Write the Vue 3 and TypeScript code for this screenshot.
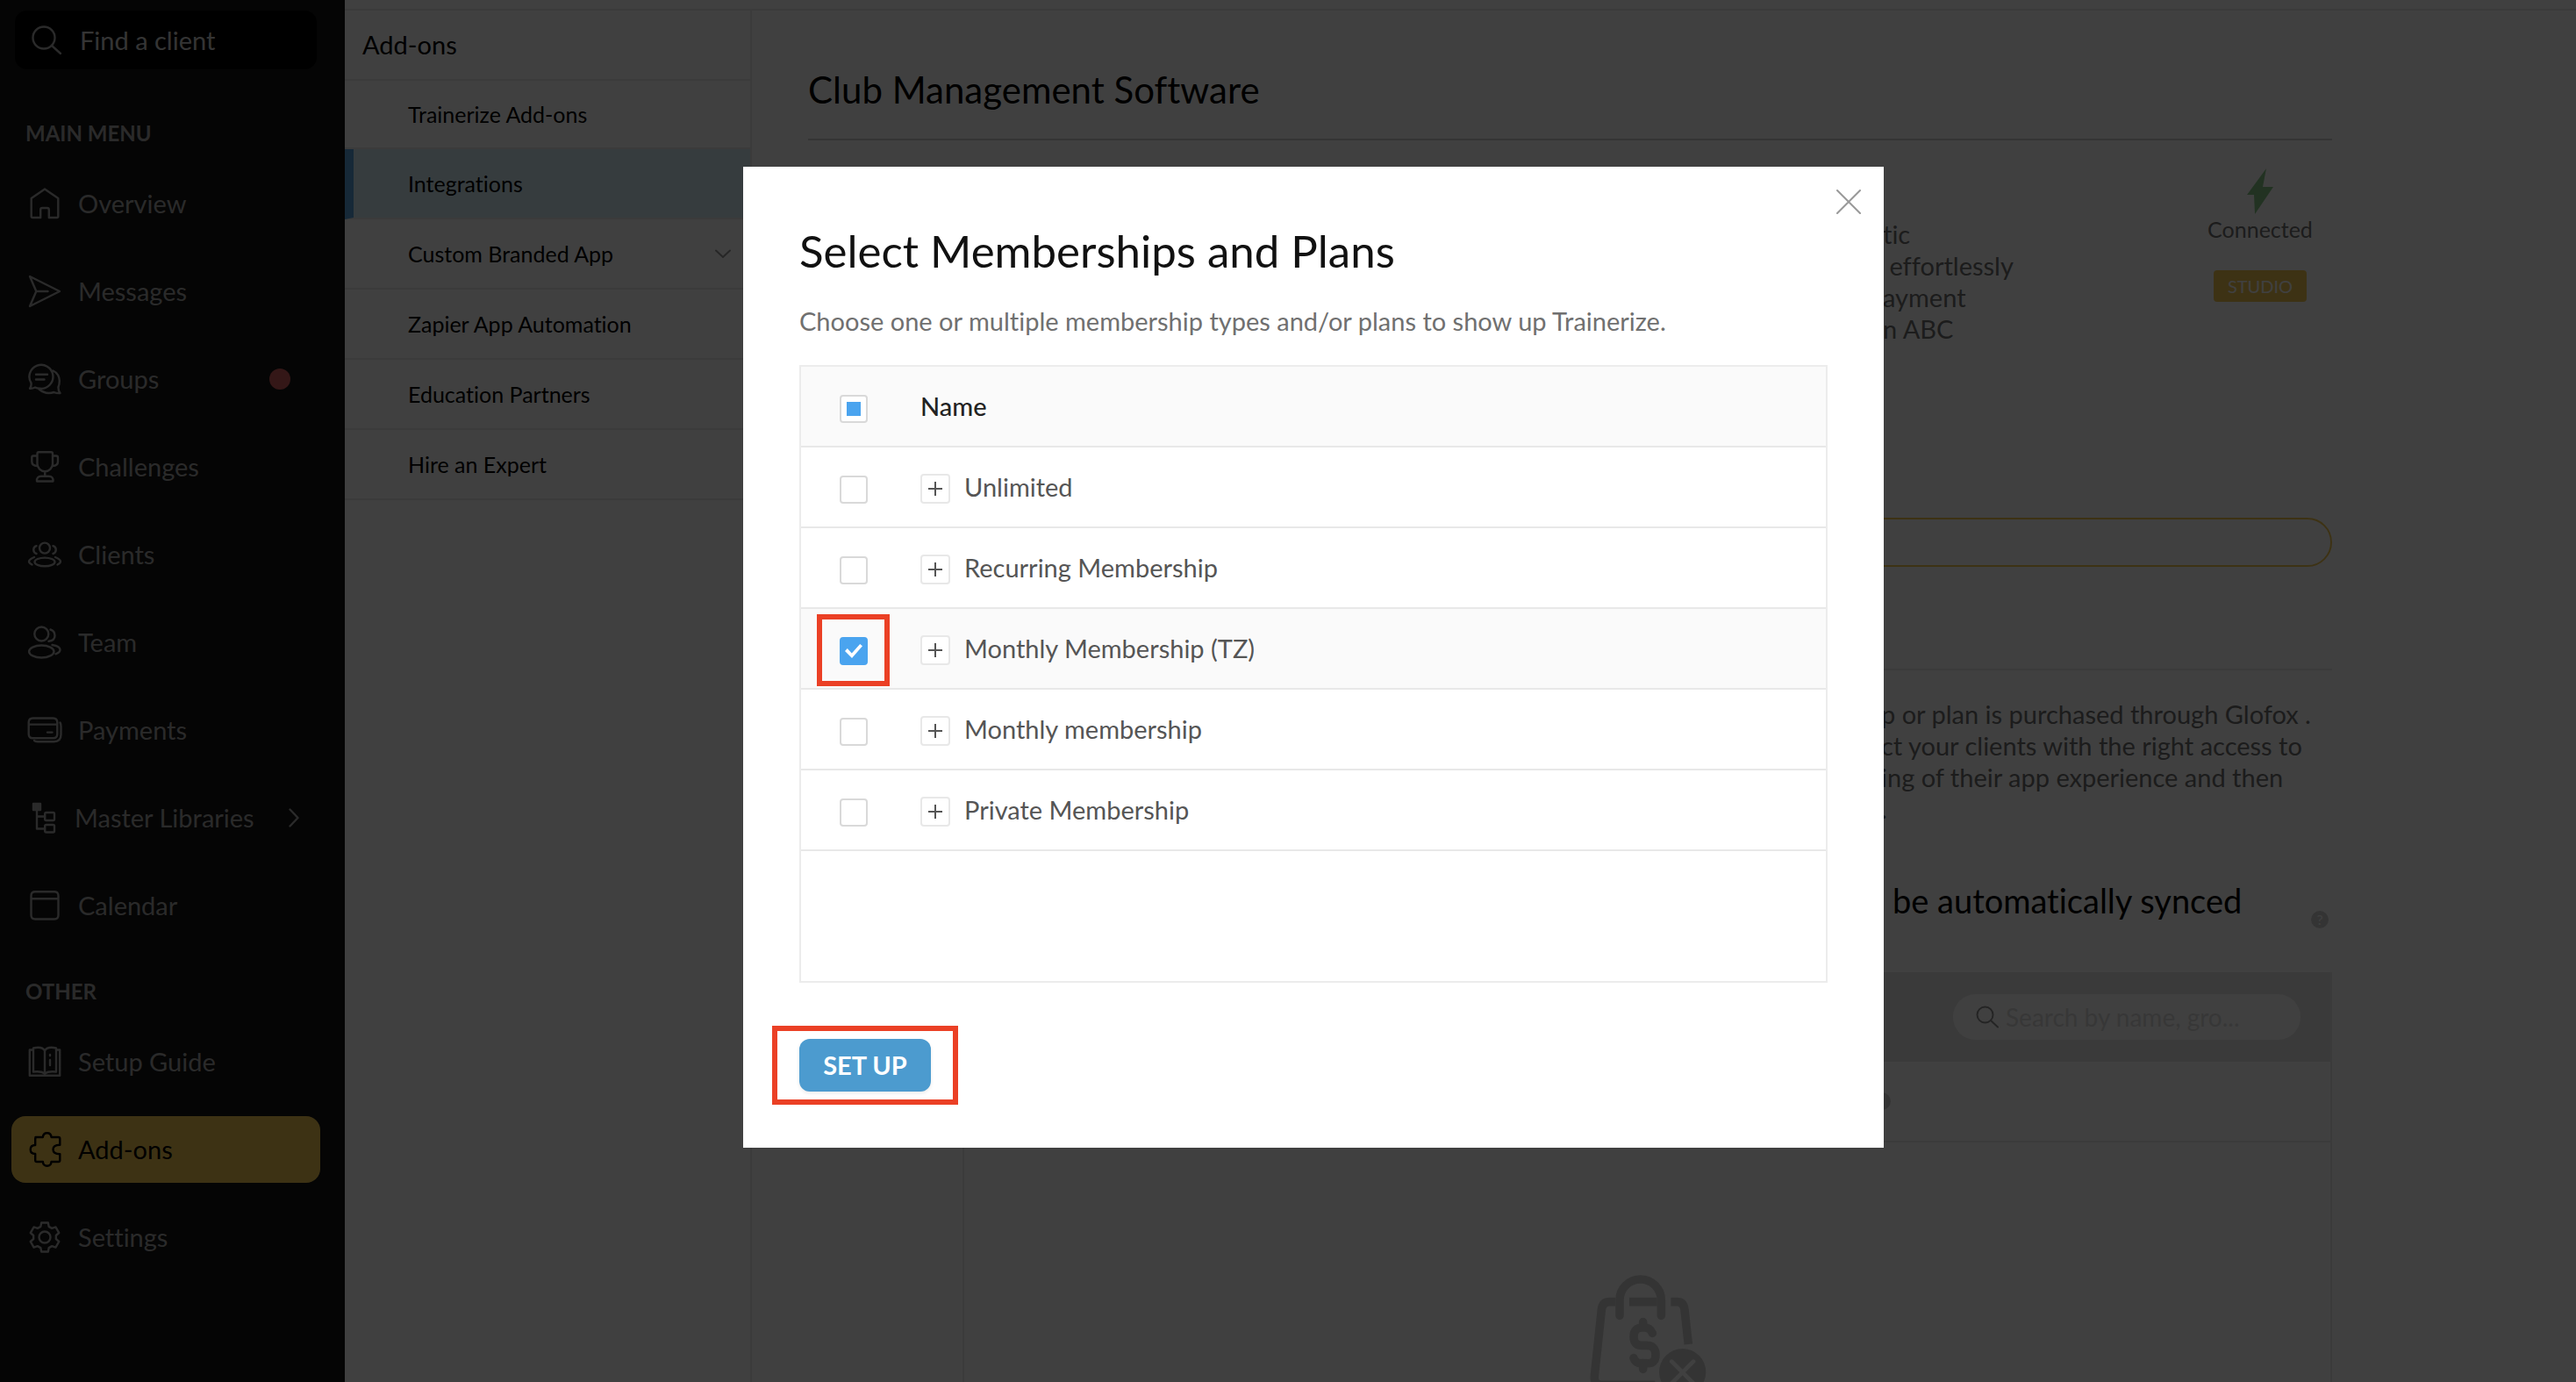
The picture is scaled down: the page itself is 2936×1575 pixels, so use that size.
<script setup lang="ts">
import { ref, computed } from 'vue'

interface NavItem {
  label: string
  icon: string
  dot?: boolean
  more?: boolean
  active?: boolean
}

// Six-toothed cog outline around (20, 20)
function cog(): string {
  const steps: [number, number][] = [[17, -13], [17, 13], [13, 21], [13, 39]]
  const points: string[] = []
  for (let tooth = 0; tooth < 6; tooth++) {
    for (const [radius, offset] of steps) {
      const angle = ((tooth * 60 + offset - 90) * Math.PI) / 180
      points.push(`${(20 + radius * Math.cos(angle)).toFixed(2)} ${(20 + radius * Math.sin(angle)).toFixed(2)}`)
    }
  }
  return `M${points.join('L')}Z M26.5 20a6.5 6.5 0 1 1-13 0a6.5 6.5 0 1 1 13 0Z`
}

const icons: Record<string, string> = {
  home: 'M20 3.5L35.3 14V34.5Q35.3 36 33.8 36H24.8V27Q24.8 25 22.8 25H17.2Q15.2 25 15.2 27V36H6.2Q4.7 36 4.7 34.5V14Z',
  send: 'M3 3L37 20L3 37L10.300 20ZM10.300 20H23.500',
  chat: 'M4.500 24.500A13.500 13.500 0 1 1 15 30.800Q11.500 31 9 29.500Q6 31 3 30.800Q5 28 4.500 24.500ZM10 14.800H23M10 20.500H19.500M29.500 10.500Q36.500 14 36.800 22Q36.800 26 35.500 29Q35.200 33 37.500 36Q34 36.500 30.500 35Q21 38 13.500 31.500',
  cup: 'M11.500 5Q11.500 3.300 13.200 3.300H27.300Q29 3.300 29 5V16.500A8.700 8.700 0 0 1 11.500 16.500ZM11.500 7.500H7Q5.300 7.500 5.300 9.500V14Q5.300 18.800 11.500 19M29 7.500H33Q35 7.500 35 9.500V14Q35 18.800 29 19M20.200 25.500V30.500M11 36.500Q10.500 30.800 16 30.800H24.500Q30 30.800 29.500 36.500Z',
  clients: 'M26 12.600a6 6 0 1 1-12 0a6 6 0 1 1 12 0ZM31.500 28.400a11.500 4.800 0 1 1-23 0a11.500 4.800 0 1 1 23 0ZM10.500 10.200A4.600 4.600 0 0 0 10.500 19M29.500 10.200A4.600 4.600 0 0 1 29.500 19M8 23Q-2.500 27.500 5.500 31.500M32 23Q42.500 27.500 34.500 31.500',
  team: 'M24.300 10.500a8 8 0 1 1-16 0a8 8 0 1 1 16 0ZM30.500 30.500a14.200 7 0 1 1-28.400 0a14.200 7 0 1 1 28.400 0ZM26.500 5.500Q31.500 7 31.500 12.500T24.500 18.800M28.500 23Q37.500 24.500 37.500 28.500Q37.500 31.500 32.500 33.300',
  card: 'M6.500 6.500H29.500Q34.300 6.500 34.300 11.300V24.500Q34.300 29.300 29.500 29.300H6.500Q1.700 29.300 1.700 24.500V11.300Q1.700 6.500 6.500 6.500ZM1.700 13.600H34.300M23 22.600H28.500M37.500 11.500Q38.500 13 38.500 16V25Q38.500 33.200 30.500 33.200H12Q9 33.200 8 32',
  tree: 'M11 12V32.500H20M11 18.500H20M21.700 14H29.500Q31 14 31 15.500V21.500Q31 23 29.500 23H21.700Q20.200 23 20.200 21.500V15.500Q20.200 14 21.700 14ZM21.700 28H29.500Q31 28 31 29.500V35Q31 36.500 29.500 36.500H21.700Q20.200 36.500 20.200 35V29.500Q20.200 28 21.700 28ZM7 4H15V11H7ZM7 6H15M7 8H15M7 10H15',
  calendar: 'M9 4.300H31Q35.500 4.300 35.500 8.800V31Q35.500 35.500 31 35.500H9Q4.500 35.500 4.500 31V8.800Q4.500 4.300 9 4.300ZM4.500 12.300H35.500',
  guide: 'M20 33.500Q16 30.500 7 31.500V4.500Q17 2 20 7.500Q23 2 33 4.500V31.500Q24 30.500 20 33.500ZM20 7.500V33.500M7 6.500H2.800V35.700H37.200V6.500H33M26 18V24M26 12V13',
  puzzle: 'M9.500 6H17.900Q18.200 1.300 22.700 1.300T27.500 6H35.500Q37.300 6 37.300 7.800V14.800Q29.500 15 29.500 20T37.300 25.200V32.200Q37.300 34 35.500 34H27.500Q27.200 38.700 22.700 38.700T17.900 34H11Q9.200 34 9.200 32.200V25Q3.700 25 3.700 20T9.200 15V7.800Q9.200 6 11 6',
  cog: cog(),
}

const mainMenu: NavItem[] = [
  { label: 'Overview', icon: 'home' },
  { label: 'Messages', icon: 'send' },
  { label: 'Groups', icon: 'chat', dot: true },
  { label: 'Challenges', icon: 'cup' },
  { label: 'Clients', icon: 'clients' },
  { label: 'Team', icon: 'team' },
  { label: 'Payments', icon: 'card' },
  { label: 'Master Libraries', icon: 'tree', more: true },
  { label: 'Calendar', icon: 'calendar' },
]
const otherMenu: NavItem[] = [
  { label: 'Setup Guide', icon: 'guide' },
  { label: 'Add-ons', icon: 'puzzle', active: true },
  { label: 'Settings', icon: 'cog' },
]
const groups = [
  { title: 'MAIN MENU', items: mainMenu },
  { title: 'OTHER', items: otherMenu },
]

const addons = [
  { label: 'Trainerize Add-ons' },
  { label: 'Integrations', active: true },
  { label: 'Custom Branded App', expandable: true },
  { label: 'Zapier App Automation' },
  { label: 'Education Partners' },
  { label: 'Hire an Expert' },
]

const memberships = ref([
  { name: 'Unlimited', checked: false },
  { name: 'Recurring Membership', checked: false },
  { name: 'Monthly Membership (TZ)', checked: true },
  { name: 'Monthly membership', checked: false },
  { name: 'Private Membership', checked: false },
])
const all = computed(() => memberships.value.every((m) => m.checked))
const some = computed(() => !all.value && memberships.value.some((m) => m.checked))
function toggleAll(event: Event) {
  const on = (event.target as HTMLInputElement).checked
  memberships.value.forEach((m) => (m.checked = on))
}
</script>

<template>
  <div class="shell">
    <aside class="sidebar">
      <label class="find">
        <svg width="36" height="36" viewBox="0 0 36 36" aria-hidden="true">
          <circle cx="15" cy="15" r="12.500" />
          <path d="M24 24L34 33" />
        </svg>
        <input type="text" placeholder="Find a client" aria-label="Find a client" />
      </label>
      <nav v-for="group in groups" :key="group.title" class="group">
        <h2>{{ group.title }}</h2>
        <a
          v-for="item in group.items"
          :key="item.label"
          href="#"
          class="nav-item"
          :class="{ active: item.active, more: item.more }"
        >
          <svg width="40" height="40" viewBox="0 0 40 40" aria-hidden="true"><path :d="icons[item.icon]" /></svg>
          <span>{{ item.label }}</span>
          <i v-if="item.dot" class="dot"></i>
          <svg v-if="item.more" class="chevron" width="12" height="22" viewBox="0 0 12 22" aria-hidden="true">
            <path d="M1.500 1.500L10.500 11L1.500 20.500" />
          </svg>
        </a>
      </nav>
    </aside>

    <div class="page">
      <section class="addons">
        <h2>Add-ons</h2>
        <a v-for="item in addons" :key="item.label" href="#" :class="{ active: item.active }">
          <span>{{ item.label }}</span>
          <svg v-if="item.expandable" width="18" height="11" viewBox="0 0 18 11" aria-hidden="true">
            <path d="M1 1.500L9 9L17 1.500" />
          </svg>
        </a>
      </section>

      <main class="content">
        <h1>Club Management Software</h1>
        <div class="intro">
          <p class="copy">tic<br />&nbsp;effortlessly<br />ayment<br />n ABC</p>
          <div class="status">
            <svg width="30" height="52" viewBox="0 0 30 52" aria-hidden="true">
              <path d="M22 0L0 30H8L9 52L30 21H18Z" />
            </svg>
            <span>Connected</span>
            <b>STUDIO</b>
          </div>
        </div>
        <div class="pill"></div>
        <div class="sync">
          <p class="copy">
            p or plan is purchased through Glofox .<br />ct your clients with the right access to<br />ing of their app
            experience and then<br />.
          </p>
          <div class="sync-title">
            <h3>be automatically synced</h3>
            <i class="help">?</i>
          </div>
        </div>
        <div class="panel">
          <div class="toolbar">
            <label class="search">
              <svg width="26" height="26" viewBox="0 0 26 26" aria-hidden="true">
                <circle cx="10.500" cy="10.500" r="9" />
                <path d="M17 17L25 24.500" />
              </svg>
              <input type="text" placeholder="Search by name, gro..." aria-label="Search by name" />
            </label>
          </div>
          <div class="columns"><i class="help"></i></div>
          <svg class="bag" width="140" height="140" viewBox="320 540 420 420" aria-hidden="true">
            <g fill="none" stroke="#d0d0d0" stroke-width="29" stroke-linecap="butt">
              <path d="M420 641H400Q375 641 372 668L348 895Q346 925 372 925H555M467 641H562M609 641H630Q653 641 656 668L669 786" />
              <path stroke-linecap="round" d="M434 688V635A71 71 0 0 1 576 635V688" />
              <path stroke-linecap="round" d="M514 710V728M514 850V871M546 748Q538 729 519 729H512Q482 729 482 760T512 790H526Q557 790 557 822T526 851H508Q488 851 482 833" />
            </g>
            <circle cx="649" cy="881" r="80" fill="#d0d0d0" stroke="none" />
            <path d="M612 845L686 919M686 845L612 919" fill="none" stroke="#fff" stroke-width="14" stroke-linecap="round" />
          </svg>
        </div>
      </main>
    </div>

    <div class="backdrop">
      <section class="modal" role="dialog" aria-labelledby="modal-title">
        <button type="button" class="close" aria-label="Close">
          <svg width="28" height="28" viewBox="0 0 28 28" aria-hidden="true"><path d="M1 1L27 27M27 1L1 27" /></svg>
        </button>
        <h2 id="modal-title">Select Memberships and Plans</h2>
        <p>Choose one or multiple membership types and/or plans to show up Trainerize.</p>
        <div class="list">
          <table>
            <thead>
              <tr>
                <th class="pick">
                  <input type="checkbox" aria-label="Select all" :checked="all" :indeterminate.prop="some" @change="toggleAll" />
                </th>
                <th>Name</th>
              </tr>
            </thead>
            <tbody>
              <tr v-for="(m, index) in memberships" :key="m.name" :class="{ checked: m.checked }">
                <td class="pick">
                  <span class="mark"><input :id="'plan-' + index" v-model="m.checked" type="checkbox" /></span>
                </td>
                <td>
                  <div class="plan">
                    <button type="button" class="expand" :aria-label="'Expand ' + m.name">
                      <svg width="16" height="16" viewBox="0 0 16 16" aria-hidden="true"><path d="M0 8H16M8 0V16" /></svg>
                    </button>
                    <label :for="'plan-' + index">{{ m.name }}</label>
                  </div>
                </td>
              </tr>
            </tbody>
          </table>
        </div>
        <button type="button" class="setup">SET UP</button>
      </section>
    </div>
  </div>
</template>

<style>
body {
  overflow: hidden;
  background: #fff;
}
</style>

<style scoped>
.shell {
  display: flex;
  height: 100vh;
  overflow: hidden;
  font-family: Lato, "Open Sans", sans-serif;
  font-size: 29px;
  font-variant-ligatures: none;
  line-height: 36px;
  color: #000;
}
.shell * {
  box-sizing: border-box;
}
h1, h2, h3, p {
  margin: 0;
  font-weight: 400;
}
a {
  color: inherit;
  text-decoration: none;
}
button, input {
  font: inherit;
}
svg {
  display: block;
  flex: none;
  fill: none;
  stroke: currentColor;
  stroke-width: 2;
  stroke-linejoin: round;
  stroke-linecap: round;
}

.sidebar {
  flex: none;
  width: 393px;
  padding-top: 12px;
  background: #141414;
  color: #a8a8a8;
}
.sidebar svg {
  stroke-width: 2.4;
}
.find {
  display: flex;
  align-items: center;
  gap: 20px;
  height: 67px;
  margin: 0 32px 13px 17px;
  padding-left: 18px;
  border-radius: 14px;
  background: #000;
}
.find input {
  width: 260px;
  padding: 0;
  border: 0;
  outline: 0;
  background: none;
  color: #d0d0d0;
}
.find input::placeholder {
  color: #d0d0d0;
  opacity: 1;
}
.group {
  display: flex;
  flex-direction: column;
  gap: 24px;
  padding: 42px 28px 0 13px;
}
.group h2 {
  padding-left: 16px;
  font-size: 24px;
  font-weight: 700;
}
.nav-item {
  display: flex;
  align-items: center;
  gap: 18px;
  height: 76px;
  padding-left: 18px;
  border-radius: 16px;
}
.nav-item.more {
  gap: 14px;
}
.nav-item.active {
  background: #f4c852;
  color: #000;
}
.dot {
  width: 24px;
  height: 24px;
  margin: 0 34px 0 auto;
  border-radius: 50%;
  background: #d05c5c;
}
.chevron {
  margin: 0 24px 0 auto;
}

.page {
  display: flex;
  flex: 1;
  min-width: 0;
  margin-top: 10px;
  border-top: 2px solid #ececec;
}
.addons {
  flex: none;
  width: 464px;
  border-right: 2px solid #ececec;
  font-size: 25px;
}
.addons h2 {
  height: 80px;
  padding-left: 20px;
  border-bottom: 2px solid #ececec;
  font-size: 29px;
  line-height: 78px;
}
.addons a {
  display: flex;
  align-items: center;
  justify-content: space-between;
  height: 80px;
  padding: 0 22px 0 72px;
  border-bottom: 2px solid #ececec;
}
.addons h2 + a {
  height: 78px;
}
.addons a.active {
  padding-left: 62px;
  border-left: 10px solid #58a4e0;
  background: #d8eef8;
}
.addons svg {
  color: #999;
}

.content {
  flex: 1;
  max-width: 1865px;
  padding: 62px 64px 0;
}
.content h1 {
  padding-bottom: 28px;
  border-bottom: 2px solid #d0d0d0;
  font-size: 42px;
  line-height: 56px;
}
.intro {
  display: flex;
  justify-content: space-between;
  padding: 32px 0 0 1225px;
  color: #707070;
}
.intro .copy {
  padding-top: 57px;
  white-space: nowrap;
}
.status {
  display: flex;
  flex-direction: column;
  align-items: center;
  width: 164px;
  font-size: 25px;
  line-height: 34px;
}
.status svg {
  fill: #88c888;
  stroke: none;
}
.status b {
  width: 106px;
  height: 36px;
  margin-top: 30px;
  border-radius: 4px;
  background: #f4c852;
  color: #fff;
  font-size: 20px;
  font-weight: 400;
  line-height: 36px;
  text-align: center;
}
.pill {
  height: 56px;
  margin-top: 197px;
  border: 2px solid #f4c852;
  border-radius: 28px;
}
.sync {
  margin-top: 116px;
  padding: 32px 0 50px 1223px;
  border-top: 2px solid #ececec;
  color: #707070;
}
.sync .copy {
  white-space: nowrap;
}
.sync-title {
  display: flex;
  align-items: flex-end;
  justify-content: space-between;
  height: 56px;
  margin-top: 62px;
  padding: 0 4px 0 13px;
  color: #000;
}
.sync h3 {
  align-self: flex-start;
  font-size: 38px;
  line-height: 48px;
}
.help {
  width: 20px;
  height: 20px;
  border-radius: 50%;
  background: #d0d0d0;
  color: #fff;
  font-size: 16px;
  font-style: normal;
  line-height: 20px;
  text-align: center;
}
.panel {
  margin-left: 176px;
  border: 2px solid #ececec;
  border-top: 0;
}
.toolbar {
  display: flex;
  align-items: center;
  justify-content: flex-end;
  height: 102px;
  padding-right: 34px;
  background: #e8e8e8;
}
.search {
  display: flex;
  align-items: center;
  gap: 8px;
  width: 396px;
  height: 52px;
  padding-left: 26px;
  border-radius: 26px;
  background: #fff;
  color: #909090;
}
.search input {
  width: 300px;
  padding: 0;
  border: 0;
  outline: 0;
  background: none;
  font-size: 28px;
}
.search input::placeholder {
  color: #dcdcdc;
  opacity: 1;
}
.columns {
  display: flex;
  align-items: center;
  height: 92px;
  padding-left: 1036px;
  border-bottom: 2px solid #ececec;
}
.bag {
  margin: 148px auto 0;
}

.backdrop {
  position: fixed;
  inset: 0;
  display: flex;
  align-items: flex-start;
  justify-content: center;
  padding: 190px 0 0 58px;
  background: rgba(0, 0, 0, 0.75);
}
.modal {
  position: relative;
  width: 1300px;
  padding: 66px 64px 64px;
  background: #fff;
}
.modal h2 {
  font-size: 51px;
  line-height: 60px;
  color: #111;
}
.modal p {
  margin: 32px 0;
  color: #707070;
}
.close {
  position: absolute;
  top: 26px;
  right: 26px;
  padding: 0;
  border: 0;
  background: none;
  color: #999;
}
.list {
  min-height: 704px;
  border: 2px solid #ececec;
}
table {
  width: 100%;
  border-spacing: 0;
}
th, td {
  height: 92px;
  padding: 0;
  border-bottom: 2px solid #e8e8e8;
  text-align: left;
  color: #555;
}
th {
  background: #fafafa;
  color: #222;
  font-weight: 500;
}
.checked td {
  background: #fafafa;
}
.pick {
  width: 136px;
  padding: 6px 0 0 44px;
}
.mark {
  position: relative;
  display: block;
  width: 32px;
  height: 32px;
}
.checked .mark::after,
.setup::after {
  content: "";
  position: absolute;
  inset: -26px -25px -24px -26px;
  border: 6px solid #eb4025;
  pointer-events: none;
}
input[type="checkbox"] {
  display: grid;
  place-content: center;
  width: 32px;
  height: 32px;
  margin: 0;
  border: 2px solid #d9d9d9;
  border-radius: 4px;
  background: #fff;
  appearance: none;
}
input[type="checkbox"]:indeterminate::before {
  content: "";
  width: 16px;
  height: 16px;
  background: #4aa4ef;
}
input[type="checkbox"]:checked {
  border-color: #4aa4ef;
  background: #4aa4ef;
}
input[type="checkbox"]:checked::before {
  content: "";
  width: 20px;
  height: 16px;
  background: #fff;
  clip-path: polygon(0 50%, 14% 32%, 39% 65%, 86% 0, 100% 14%, 40% 100%);
}
.plan {
  display: flex;
  align-items: center;
  gap: 16px;
}
.expand {
  display: grid;
  place-content: center;
  width: 34px;
  height: 34px;
  margin-top: 4px;
  padding: 0;
  border: 2px solid #e8e8e8;
  border-radius: 4px;
  background: #fff;
  color: #555;
}
.expand svg {
  stroke-linecap: butt;
}
.setup {
  position: relative;
  display: block;
  width: 150px;
  height: 60px;
  margin-top: 64px;
  padding: 0;
  border: 0;
  border-radius: 12px;
  background: #4c9bcf;
  box-shadow: 0 2px 4px rgba(0, 0, 0, 0.08);
  color: #fff;
  font-weight: 700;
}
.setup::after {
  inset: -15px -31px;
}
</style>
